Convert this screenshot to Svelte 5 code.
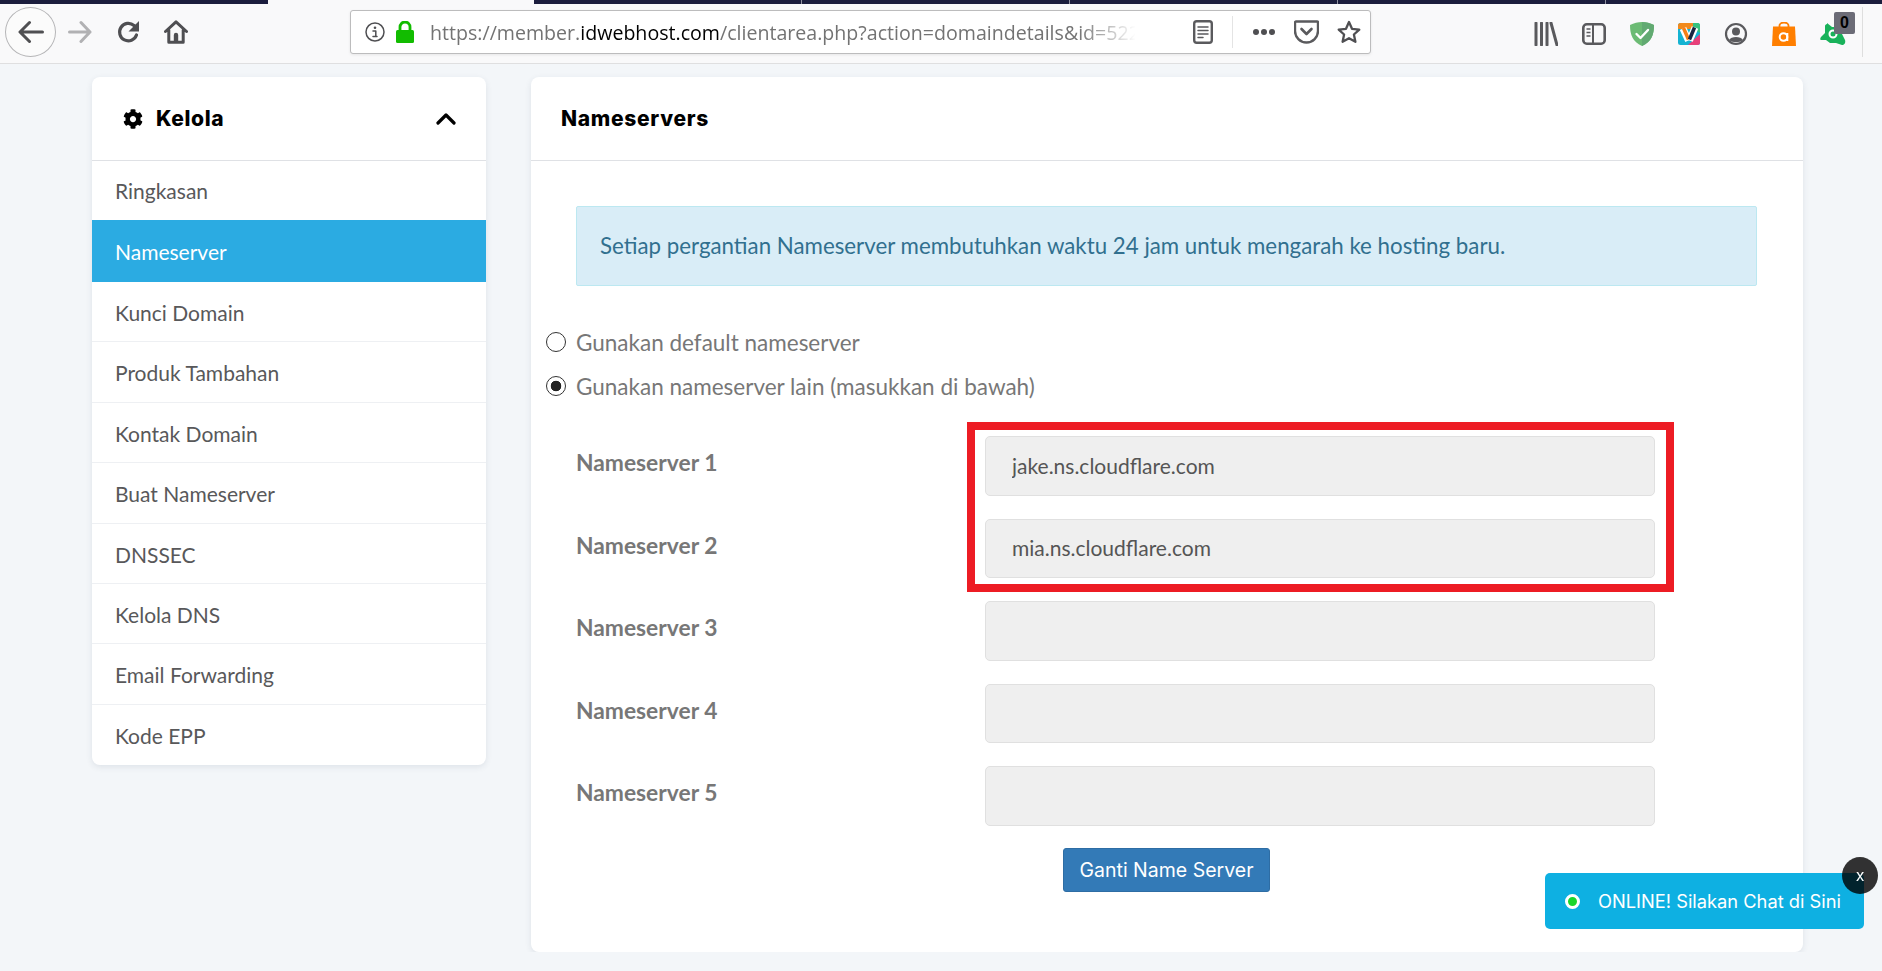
<script>
  const menu = ['Ringkasan','Nameserver','Kunci Domain','Produk Tambahan','Kontak Domain','Buat Nameserver','DNSSEC','Kelola DNS','Email Forwarding','Kode EPP'];
  const ns = [
    { label: 'Nameserver 1', value: 'jake.ns.cloudflare.com' },
    { label: 'Nameserver 2', value: 'mia.ns.cloudflare.com' },
    { label: 'Nameserver 3', value: '' },
    { label: 'Nameserver 4', value: '' },
    { label: 'Nameserver 5', value: '' }
  ];
</script>

<div class="strip">
  <i class="d a"></i><i class="l b"></i><i class="d c"></i><i class="d c"></i><i class="d c"></i><i class="d c"></i><i class="d e"></i>
</div>
<header class="toolbar">
  <div class="back">
    <svg viewBox="0 0 26 24" width="26" height="24"><path d="M24.500 12H2.500M11.500 2.500L2 12l9.500 9.500" class="st" stroke="#4f4f52" stroke-width="3"/></svg>
  </div>
  <svg class="fwd" viewBox="0 0 24 24" width="24" height="24"><path d="M1.500 12h20.500M13 2.500l9 9.500-9 9.500" class="st" stroke="#b1b1b3" stroke-width="3"/></svg>
  <svg class="reload" viewBox="0 0 24 24" width="24" height="24"><path d="M19.500 15A8.700 8.700 0 1 1 17 5.500L20 8" class="st" stroke="#4f4f52" stroke-width="3.200"/><path d="M22 1v10.500H11.500z" fill="#4f4f52"/></svg>
  <svg class="home" viewBox="0 0 24 24" width="24" height="24"><path d="M1.500 11.500L12 1.800l10.500 9.700M4.800 10v12.200h14.400V10" class="st" stroke="#4f4f52" stroke-width="3"/><path d="M9.800 22.500v-7.500a2.200 2.200 0 0 1 4.400 0v7.500z" fill="#4f4f52"/></svg>

  <div class="urlbar">
    <svg class="info" viewBox="0 0 20 20" width="20" height="20"><circle cx="10" cy="10" r="9" fill="none" stroke="#4f4f52" stroke-width="1.500"/><circle cx="10" cy="5.800" r="1.300" fill="#4f4f52"/><path d="M8 9h2.800v5.500H12M8 14.500h4" class="st" stroke="#4f4f52" stroke-width="1.500"/></svg>
    <svg class="lock" viewBox="0 0 18 22" width="18" height="22"><rect x="0" y="9" width="18" height="13" rx="1.500" fill="#12bc00"/><path d="M4 10V6a5 5 0 0 1 10 0v4" fill="none" stroke="#12bc00" stroke-width="2.800"/></svg>
    <div class="url">https://member.<b>idwebhost.com</b>/clientarea.php?action=domaindetails&amp;id=522</div>
    <svg class="reader" viewBox="0 0 20 24" width="20" height="24"><rect x="1.200" y="1.200" width="17.600" height="21.600" rx="2.500" fill="none" stroke="#5a5a5d" stroke-width="2.400"/><path d="M5 7h10M5 10.500h10M5 14h10M5 17.500h5" class="st" stroke="#5a5a5d" stroke-width="1.500"/></svg>
    <i class="vsep"></i>
    <svg class="dots" viewBox="0 0 24 8" width="24" height="8"><circle cx="4" cy="4" r="3" fill="#4f4f52"/><circle cx="12" cy="4" r="3" fill="#4f4f52"/><circle cx="20" cy="4" r="3" fill="#4f4f52"/></svg>
    <svg class="pocket" viewBox="0 0 25 24" width="25" height="24"><path d="M2 1.500h21a1 1 0 0 1 1 1V11a11.500 11.500 0 0 1-23 0V2.500a1 1 0 0 1 1-1z" fill="none" stroke="#5a5a5d" stroke-width="2.400"/><path d="M7.500 9l5 5 5-5" class="st" stroke="#5a5a5d" stroke-width="2.600"/></svg>
    <svg class="star" viewBox="0 0 24 24" width="24" height="24"><path d="M12 2l3 6.800 7.300.8-5.400 4.900 1.500 7.300L12 18.200l-6.400 3.600 1.500-7.300L1.700 9.600 9 8.800z" fill="none" stroke="#4f4f52" stroke-width="2.300" stroke-linejoin="round"/></svg>
  </div>

  <div class="ext">
    <svg viewBox="0 0 24 24" width="24" height="24"><path d="M2 1v22M7.500 1v22M13 1v22M17 1l6 22" class="st" stroke="#5a5a5d" stroke-width="3"/></svg>
    <svg viewBox="0 0 24 24" width="24" height="24"><rect x="1.300" y="2.300" width="21.400" height="19.400" rx="3.500" fill="none" stroke="#5a5a5d" stroke-width="2.600"/><path d="M11 2v20" stroke="#5a5a5d" stroke-width="2"/><path d="M4.500 7h4M4.500 10.500h4M4.500 14h4" stroke="#5a5a5d" stroke-width="1.600"/></svg>
    <svg viewBox="0 0 24 24" width="24" height="24"><path d="M12 0C8 0 4 1 0 3c0 9.500 2.500 16.500 12 21 9.500-4.500 12-11.500 12-21-4-2-8-3-12-3z" fill="#6cbb74"/><path d="M12 0v24c9.500-4.500 12-11.500 12-21-4-2-8-3-12-3z" fill="#62aa72"/><path d="M6.500 12l4 4 7.500-8" class="st" stroke="#fff" stroke-width="2.400"/></svg>
    <svg viewBox="0 0 22 22" width="22" height="22"><rect width="22" height="22" rx="2.500" fill="#15b3d2"/><path d="M0 2.500A2.500 2.500 0 0 1 2.500 0H15v6H0z" fill="#f28a1c"/><path d="M15 0h4.500A2.500 2.500 0 0 1 22 2.500V10l-7-4z" fill="#35c27e"/><path d="M22 11v8.500a2.500 2.500 0 0 1-2.500 2.500H10z" fill="#e8407a"/><path d="M5 5.500l5.500 12" fill="none" stroke="#fff" stroke-width="7"/><path d="M17 4.500l-5.500 13" fill="none" stroke="#fff" stroke-width="7"/><path d="M5.500 5l5 11.500" fill="none" stroke="#f57f17" stroke-width="3.500"/><path d="M16.500 4.500l-5 12" fill="none" stroke="#1a2540" stroke-width="3.500"/></svg>
    <svg viewBox="0 0 24 24" width="24" height="24"><circle cx="12" cy="12" r="10" fill="none" stroke="#5a5a5d" stroke-width="2.200"/><circle cx="12" cy="9.500" r="4" fill="#5a5a5d"/><path d="M5 18c2-4 12-4 14 0-3.500 3-10.500 3-14 0z" fill="#5a5a5d"/></svg>
    <svg viewBox="0 0 24 24" width="24" height="24"><path d="M1 4.500h22L24 24H0z" fill="#ff7f00"/><path d="M7.500 6V3.500a4.500 3 0 0 1 9 0V6" fill="none" stroke="#ff7f00" stroke-width="1.800"/><circle cx="11.500" cy="15" r="3.800" fill="none" stroke="#fff" stroke-width="2"/><path d="M15.300 11v8" stroke="#fff" stroke-width="2"/></svg>
    <span class="avast">
      <svg viewBox="0 0 26 24" width="26" height="24"><path d="M7 1l5 4c4 0 8 2 9 5l4 8c1 3-1 5-3 5l-6-2H10l-4-3-5 0c-1 0-1-2 0-3l4-4V4c0-1 1-2 2-2z" fill="#19b25a"/><circle cx="13" cy="12" r="3.500" fill="none" stroke="#fff" stroke-width="2"/></svg>
      <em>0</em>
    </span>
  </div>
  <i class="endsep"></i>
</header>

<main class="page">
  <aside class="side">
    <div class="side-head">
      <svg class="cog" viewBox="0 0 512 512" width="20" height="20"><path fill="#000" d="M487.4 315.7l-42.6-24.6c4.3-23.2 4.3-47 0-70.2l42.6-24.6c4.9-2.8 7.1-8.6 5.500-14-11.100-35.600-30-67.800-54.700-94.600-3.800-4.100-10-5.100-14.800-2.300L380.800 110c-17.900-15.400-38.500-27.300-60.800-35.100V25.800c0-5.600-3.900-10.500-9.400-11.700-36.700-8.200-74.300-7.800-109.200 0-5.500 1.200-9.400 6.100-9.400 11.700V75c-22.200 7.900-42.800 19.800-60.800 35.100L88.700 85.500c-4.900-2.800-11-1.900-14.800 2.300-24.700 26.700-43.600 58.900-54.700 94.600-1.700 5.400.6 11.200 5.500 14L67.300 221c-4.300 23.200-4.300 47 0 70.200l-42.600 24.600c-4.900 2.800-7.100 8.600-5.500 14 11.100 35.600 30 67.800 54.700 94.600 3.800 4.100 10 5.100 14.800 2.300l42.600-24.600c17.900 15.400 38.500 27.300 60.800 35.100v49.200c0 5.600 3.900 10.500 9.400 11.700 36.700 8.200 74.300 7.800 109.200 0 5.500-1.200 9.400-6.100 9.400-11.700v-49.200c22.200-7.900 42.800-19.800 60.800-35.100l42.600 24.600c4.900 2.800 11 1.900 14.800-2.300 24.700-26.700 43.600-58.900 54.700-94.600 1.500-5.500-.7-11.300-5.600-14.100zM256 336c-44.100 0-80-35.900-80-80s35.900-80 80-80 80 35.900 80 80-35.900 80-80 80z"/></svg>
      <span class="kelola">Kelola</span>
      <svg class="chev" viewBox="0 0 20 12" width="20" height="12"><path d="M2 10l8-8 8 8" class="st" stroke="#000" stroke-width="3.200"/></svg>
    </div>
    <ul>
      {#each menu as m, i}
        <li class:active={i === 1}>{m}</li>
      {/each}
    </ul>
  </aside>

  <section class="card">
    <div class="card-head">Nameservers</div>
    <div class="card-body">
      <div class="alert">Setiap pergantian Nameserver membutuhkan waktu 24 jam untuk mengarah ke hosting baru.</div>
      <label class="radio first"><input type="radio" name="ns" />Gunakan default nameserver</label>
      <label class="radio"><input type="radio" name="ns" checked />Gunakan nameserver lain (masukkan di bawah)</label>
      <div class="rows">
        <div class="redbox"></div>
        {#each ns as n}
          <div class="row">
            <div class="lab">{n.label}</div>
            <input class="inp" type="text" value={n.value} readonly />
          </div>
        {/each}
      </div>
      <div class="actions"><button type="button">Ganti Name Server</button></div>
    </div>
  </section>
</main>

<div class="chat">
  <span class="dot"></span>
  <span>ONLINE! Silakan Chat di Sini</span>
</div>
<div class="close">x</div>

<style>
  :global(body) { margin: 0; background: #f3f6f9; font-family: Lato, "Liberation Sans", sans-serif; overflow: hidden; }
  .st { fill: none; stroke-linecap: round; stroke-linejoin: round; }
  svg { flex: none; display: block; }

  .strip { height: 4px; display: flex; background: #f9f9fa; }
  .strip i { display: block; height: 4px; }
  .strip .d { background: #1b1d3d; border-right: 1px solid #8f909f; box-sizing: border-box; }
  .strip .a { width: 268px; border-right: 0; }
  .strip .b { width: 266px; }
  .strip .c { width: 268px; }
  .strip .e { flex: 1; border-right: 0; }

  .toolbar { height: 59px; box-sizing: content-box; background: #f9f9fa; border-bottom: 1px solid #dfdfe0; display: flex; align-items: center; position: relative; padding-bottom: 0; }
  .toolbar > * { position: relative; top: -1.500px; }
  .back { width: 51px; height: 50px; box-sizing: border-box; margin-left: 5px; border: 1px solid #b5b5b7; border-radius: 50%; background: #fbfbfb; display: flex; align-items: center; justify-content: center; }
  .fwd { margin-left: 12px; }
  .reload { margin-left: 25px; }
  .home { margin-left: 23px; }
  .urlbar { margin-left: 162px; width: 1021px; height: 44px; box-sizing: border-box; background: #fff; border: 1px solid #bcbcbd; border-radius: 3px; display: flex; align-items: center; box-shadow: 0 1px 3px rgba(0,0,0,.08); }
  .info { margin-left: 14px; }
  .lock { margin-left: 11px; }
  .url { margin-left: 16px; width: 720px; flex: none; overflow: hidden; white-space: nowrap; font-family: "Open Sans", sans-serif; font-size: 19.600px; color: #737373; -webkit-mask-image: linear-gradient(90deg, #000 90%, transparent 98%); mask-image: linear-gradient(90deg, #000 90%, transparent 98%); }
  .url b { font-weight: 400; color: #000; }
  .reader { margin-left: 43px; }
  .vsep { width: 1px; height: 32px; background: #e4e4e4; margin-left: 19px; }
  .dots { margin-left: 19px; }
  .pocket { margin-left: 18px; }
  .star { margin-left: 18px; }
  .ext { margin-left: 163px; display: flex; align-items: center; gap: 24px; top: 0; }
  .avast { position: relative; display: block; width: 24px; height: 24px; }
  .avast em { position: absolute; left: 14px; top: -10px; width: 21px; height: 22px; border-radius: 2px; background: #6b6b76; color: #000; font: 700 16px/22px "Liberation Sans", sans-serif; text-align: center; }
  .endsep { position: absolute; left: 1862px; top: 3px; width: 1px; height: 50px; background: #dedede; }

  .page { display: flex; align-items: flex-start; padding: 13px 0 0 92px; gap: 45px; }
  .side, .card { background: #fff; border-radius: 8px; box-shadow: 0 2px 6px rgba(40,60,90,.1); }
  .side { width: 394px; }
  .side-head { height: 84px; box-sizing: border-box; border-bottom: 1px solid #dfe1e5; display: flex; align-items: center; padding: 0 30px 0 31px; }
  .kelola { margin-left: 13px; font: 800 21px "Inter", sans-serif; letter-spacing: .6px; color: #000; }
  .chev { margin-left: auto; }
  ul { list-style: none; margin: 0; padding: 0; }
  li { height: 60.400px; line-height: 61.500px; box-sizing: border-box; padding-left: 23px; font-size: 21px; color: #58585a; border-bottom: 1px solid #eef0f3; }
  li:first-child { height: 59px; line-height: 60px; border-bottom: 0; }
  li:last-child { border-bottom: 0; }
  li.active { height: 62px; line-height: 64px; background: #2babe2; color: #fff; border-bottom: 0; }

  .card { width: 1272px; height: 875px; }
  .card-head { height: 84px; box-sizing: border-box; border-bottom: 1px solid #dfe1e5; padding-left: 30px; font: 800 21px/83px "Inter", sans-serif; letter-spacing: .7px; color: #000; }
  .card-body { padding: 45px 0 0 45px; }
  .alert { width: 1181px; height: 80px; box-sizing: border-box; line-height: 78px; padding-left: 23px; font-size: 22.300px; color: #31708f; background: #d9edf7; border: 1px solid #bce8f1; border-radius: 2px; }
  .radio { display: flex; align-items: center; height: 44px; font-size: 22.500px; color: #777; }
  .radio.first { margin-top: 34px; }
  .radio input { appearance: none; width: 20px; height: 20px; margin: 0 10px 0 -30px; box-sizing: border-box; border: 1px solid #333; border-radius: 50%; background: #fff; }
  .radio input:checked { background: radial-gradient(circle, #222 0 5px, #fff 5.600px); }
  .rows { position: relative; margin-top: 28px; }
  .redbox { position: absolute; left: 391px; top: -14px; width: 707px; height: 170px; box-sizing: border-box; border: 8px solid #ed1c24; pointer-events: none; }
  .row { display: grid; grid-template-columns: 409px 670px; height: 59.500px; margin-bottom: 23px; }
  .lab { padding-top: 13px; font-size: 22.800px; line-height: 26px; font-weight: 700; color: #777; }
  .inp { width: 100%; height: 59.500px; box-sizing: border-box; padding: 0 26px 1px; background: #efefef; border: 1px solid #e0e0e0; border-radius: 5px; font: 400 21px Lato, sans-serif; color: #555; outline: none; }
  .actions { width: 1181px; margin-top: -1px; text-align: center; }
  button { width: 207px; height: 44px; background: #337ab7; border: 1px solid #2e6da4; border-radius: 3px; color: #fff; font: 400 19.500px "Inter", sans-serif; padding: 0; }

  .chat { position: fixed; left: 1545px; top: 873px; width: 319px; height: 56px; box-sizing: border-box; background: #0eb0e2; border-radius: 5px; color: #fff; display: flex; align-items: center; padding-left: 20px; gap: 18px; font: 400 18.300px "Inter", sans-serif; }
  .dot { width: 15px; height: 15px; box-sizing: border-box; border-radius: 50%; background: #19d62c; border: 3px solid #fff; flex: none; }
  .close { position: fixed; left: 1842px; top: 857px; width: 36px; height: 37px; border-radius: 50%; background: rgba(0,0,0,.8); color: #fff; text-align: center; font: 400 16px/37px "Inter", sans-serif; }
</style>
